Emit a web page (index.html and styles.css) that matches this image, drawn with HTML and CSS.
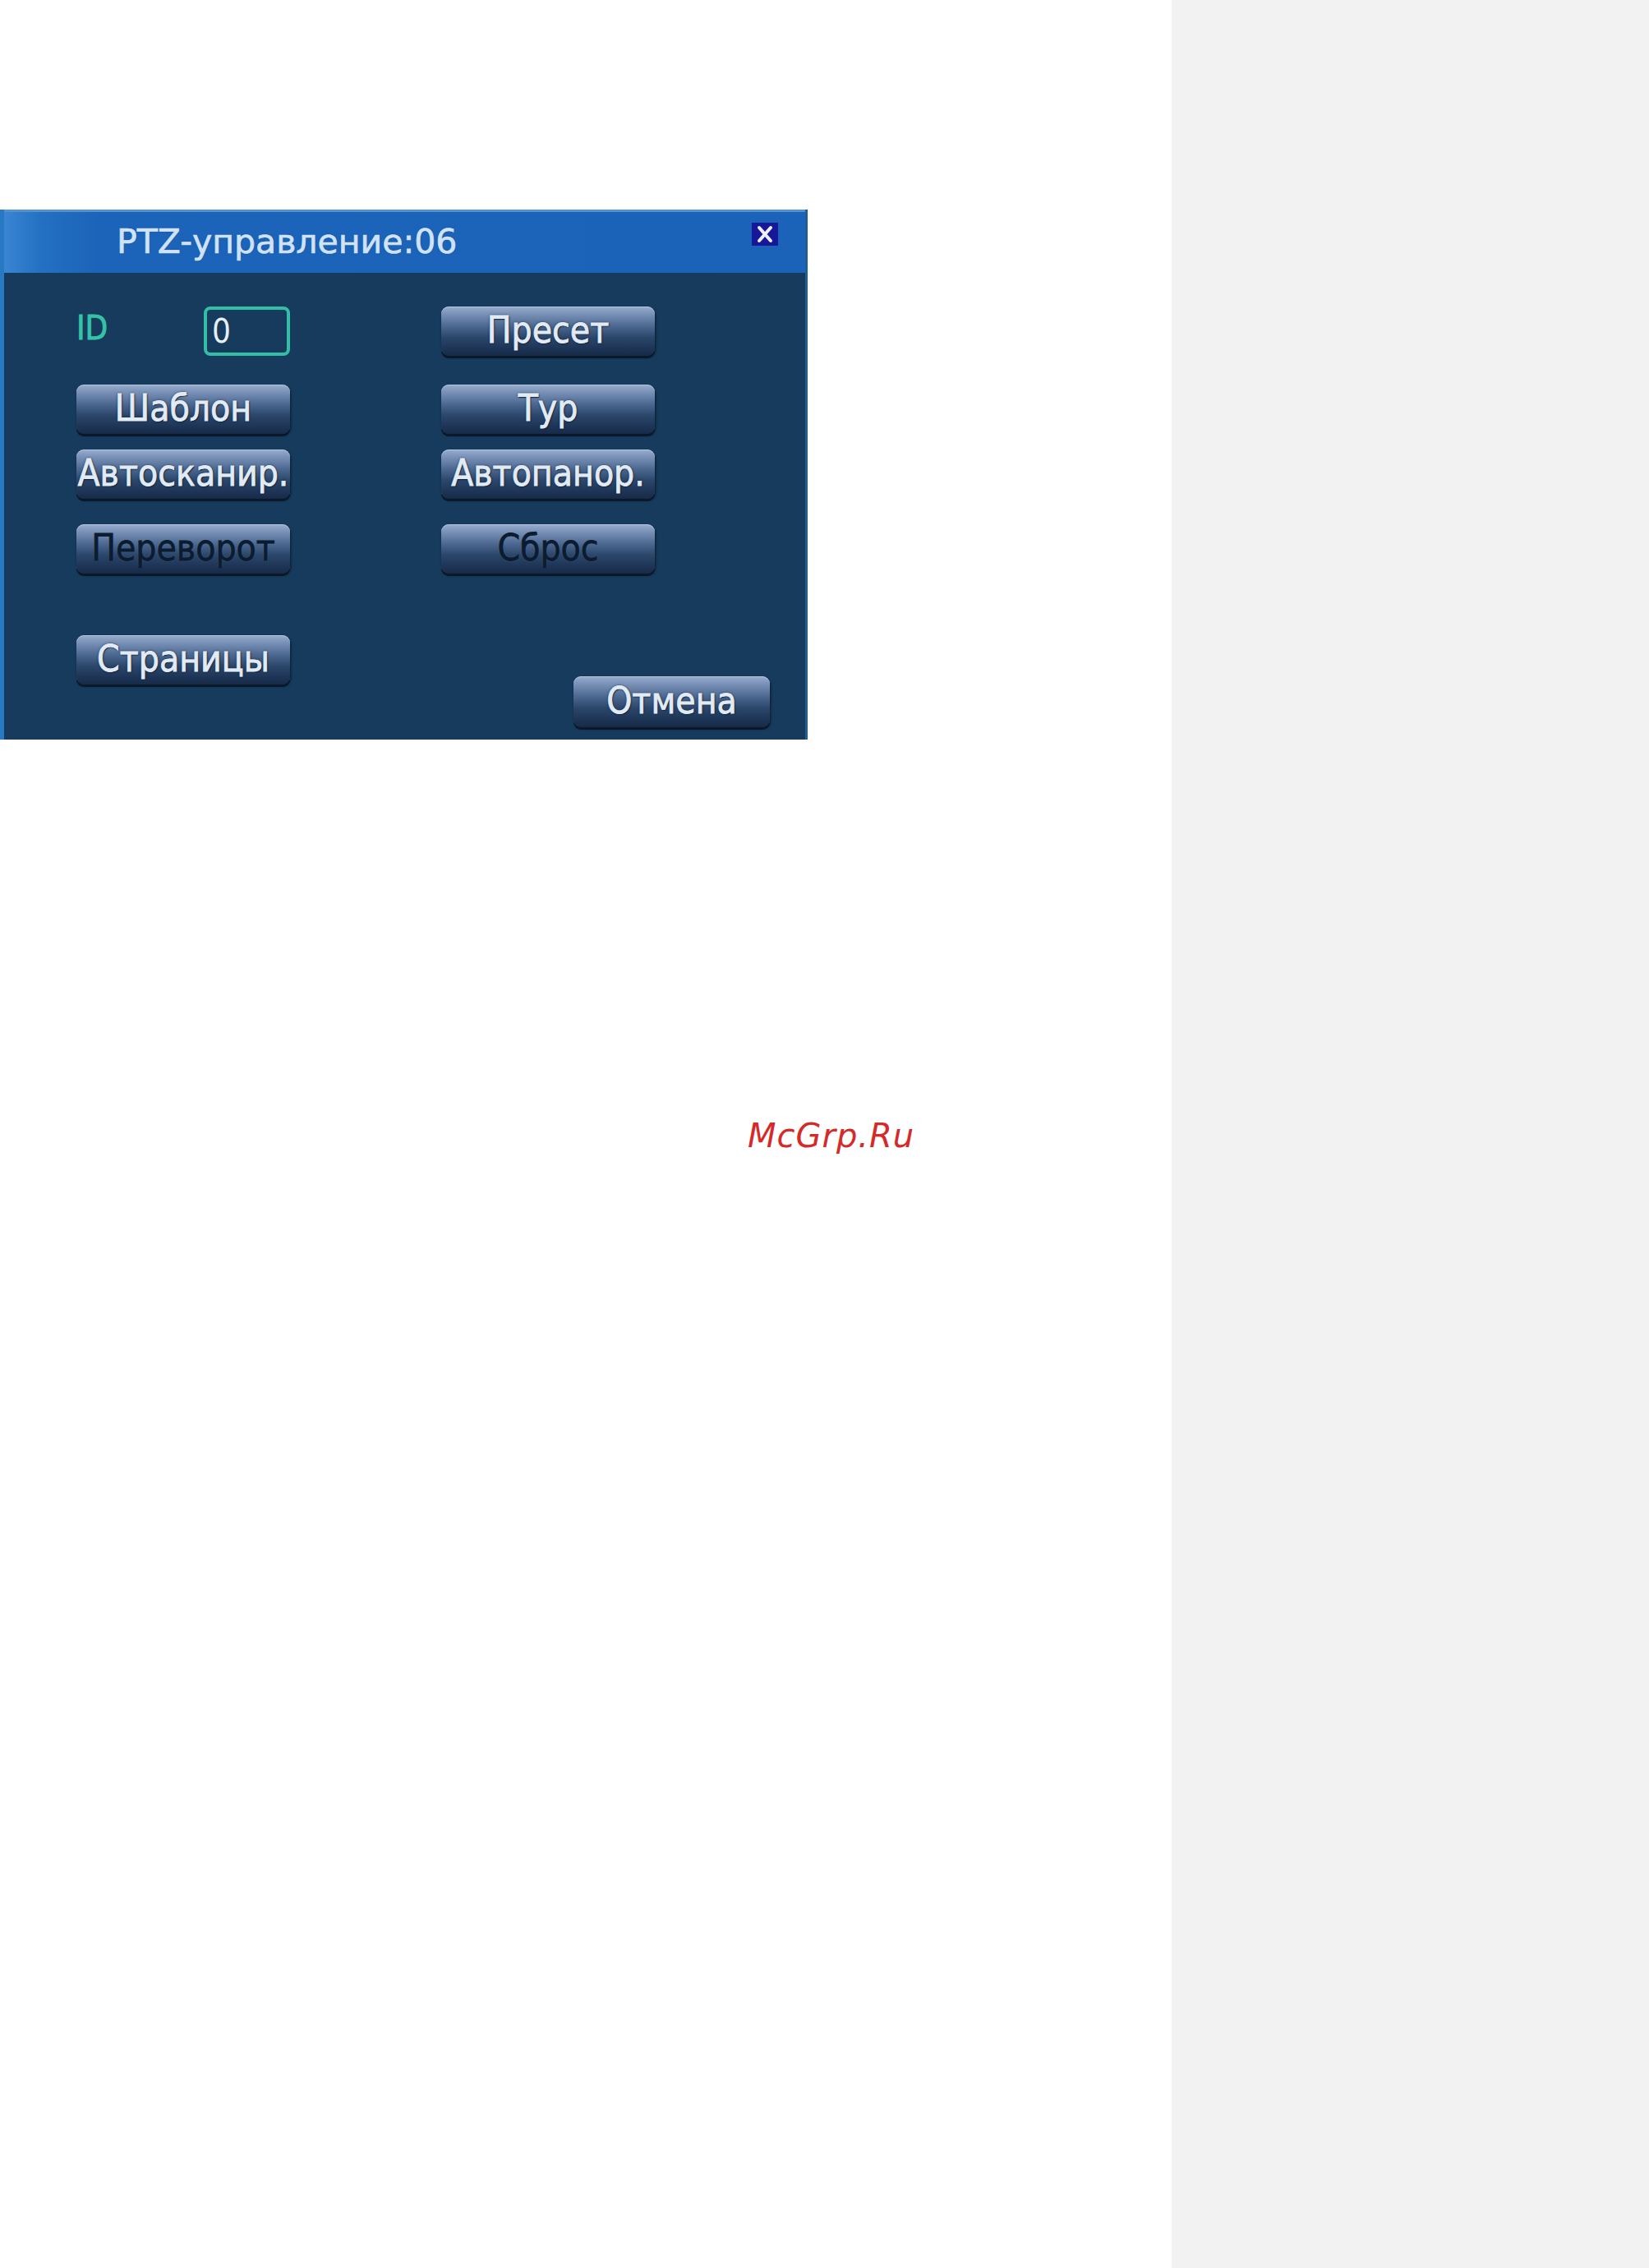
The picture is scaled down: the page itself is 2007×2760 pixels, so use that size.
FILE: index.html
```html
<!DOCTYPE html>
<html lang="ru">
<head>
<meta charset="utf-8">
<title>PTZ-управление</title>
<link rel="stylesheet" href="styles.css">
</head>
<body>
<div class="page">
  <main class="main">
    <section class="dialog">
      <header class="titlebar">
        <span class="title">PTZ-управление:06</span>
        <span class="close">
          <svg viewBox="0 0 32 28" width="32" height="28"><rect width="32" height="28" fill="#17179a"/><path d="M9 6 L23 22 M23 6 L9 22" stroke="#eef0ff" stroke-width="4" stroke-linecap="round"/></svg>
        </span>
      </header>
      <div class="body">
        <div class="row r1">
          <div class="cell idcell">
            <span class="idlabel">ID</span>
            <span class="idinput">0</span>
          </div>
          <div class="btn">Пресет</div>
        </div>
        <div class="row r2">
          <div class="btn">Шаблон</div>
          <div class="btn">Тур</div>
        </div>
        <div class="row r3">
          <div class="btn">Автосканир.</div>
          <div class="btn">Автопанор.</div>
        </div>
        <div class="row r4">
          <div class="btn disabled">Переворот</div>
          <div class="btn disabled">Сброс</div>
        </div>
        <div class="row r5">
          <div class="btn">Страницы</div>
          <div class="btn cancel">Отмена</div>
        </div>
      </div>
    </section>
    <div class="watermark">McGrp.Ru</div>
  </main>
  <aside class="side"></aside>
</div>
</body>
</html>
```
FILE: styles.css
```css
html, body {
  margin: 0;
  padding: 0;
  background: #ffffff;
}
.page {
  display: flex;
  width: 2007px;
  height: 2760px;
}
.main {
  width: 1426px;
  background: #ffffff;
  display: flex;
  flex-direction: column;
}
.side {
  width: 581px;
  background: #f2f2f2;
}
.dialog {
  margin-top: 255px;
  width: 983px;
  height: 645px;
  background: #163b5c;
  box-sizing: border-box;
  border-left: 5px solid #2879c4;
  border-right: 3px solid #1f5f98;
  display: flex;
  flex-direction: column;
  overflow: hidden;
}
.titlebar {
  height: 77px;
  margin-left: -5px;
  margin-right: -3px;
  box-sizing: border-box;
  border-top: 3px solid #4f93d2;
  background: linear-gradient(to right, #3c88d4 0, #2470c2 5%, #1c64b9 12%, #1b63b8 100%);
  display: flex;
  align-items: center;
  padding-left: 142px;
}
.title {
  font-family: "DejaVu Sans", sans-serif;
  font-size: 41px;
  color: #cfe2f8;
  -webkit-text-stroke: 0.7px #cfe2f8;
  text-shadow: 0 0 2px rgba(10, 40, 90, 0.6);
  line-height: 1;
  margin-top: -2px;
}
.close {
  margin-left: auto;
  margin-right: 36px;
  align-self: flex-start;
  margin-top: 13px;
  width: 32px;
  height: 28px;
  display: block;
}
.close svg { display: block; }
.body {
  padding: 41px 0 0 88px;
  display: flex;
  flex-direction: column;
}
.row {
  display: flex;
  align-items: flex-start;
  gap: 184px;
}
.r2 { margin-top: 35px; }
.r3 { margin-top: 19px; }
.r4 { margin-top: 31px; }
.r5 { margin-top: 75px; gap: 0; }
.cell {
  width: 260px;
  height: 60px;
}
.idcell {
  display: flex;
  align-items: center;
}
.idlabel {
  font-family: "DejaVu Sans Condensed", "DejaVu Sans", sans-serif;
  font-stretch: condensed;
  font-size: 40px;
  color: #35c2a6;
  -webkit-text-stroke: 0.8px #35c2a6;
  line-height: 1;
  margin-top: -8px;
}
.idinput {
  margin-left: auto;
  width: 105px;
  height: 60px;
  box-sizing: border-box;
  border: 4px solid #32bfa6;
  border-radius: 8px;
  font-family: "DejaVu Sans Condensed", "DejaVu Sans", sans-serif;
  font-stretch: condensed;
  font-size: 40px;
  color: #e6eef6;
  padding-left: 6px;
  display: flex;
  align-items: center;
  line-height: 1;
}
.btn {
  width: 260px;
  height: 60px;
  box-sizing: border-box;
  border-radius: 9px;
  background: linear-gradient(to bottom, #98adcf 0%, #7890b6 16%, #4c6890 40%, #2c476b 62%, #1f3759 82%, #172a48 100%);
  box-shadow: 0 3px 0 #0b1829, 1px 2px 3px rgba(0, 0, 0, 0.55), inset 0 1px 0 rgba(200, 215, 240, 0.6);
  display: flex;
  align-items: center;
  justify-content: center;
  font-family: "DejaVu Sans Condensed", "DejaVu Sans", sans-serif;
  font-stretch: condensed;
  font-size: 44px;
  line-height: 1;
  color: #e2ebf4;
  -webkit-text-stroke: 0.8px #e2ebf4;
  text-shadow: 0 0 3px #0d1f38, 1px 1px 1px #0d1f38;
  white-space: nowrap;
  padding-bottom: 2px;
}
.btn.disabled {
  color: #0c1c30;
  -webkit-text-stroke: 0.8px #0c1c30;
  text-shadow: 0 0 2px rgba(120, 150, 190, 0.5);
}
.cancel {
  width: 239px;
  height: 62px;
  margin-top: 50px;
  margin-left: 345px;
}
.watermark {
  margin-top: 462px;
  margin-left: 910px;
  font-family: "DejaVu Sans", sans-serif;
  font-style: italic;
  font-size: 40px;
  color: #d42a2a;
  letter-spacing: 1px;
  line-height: 1;
}
```
